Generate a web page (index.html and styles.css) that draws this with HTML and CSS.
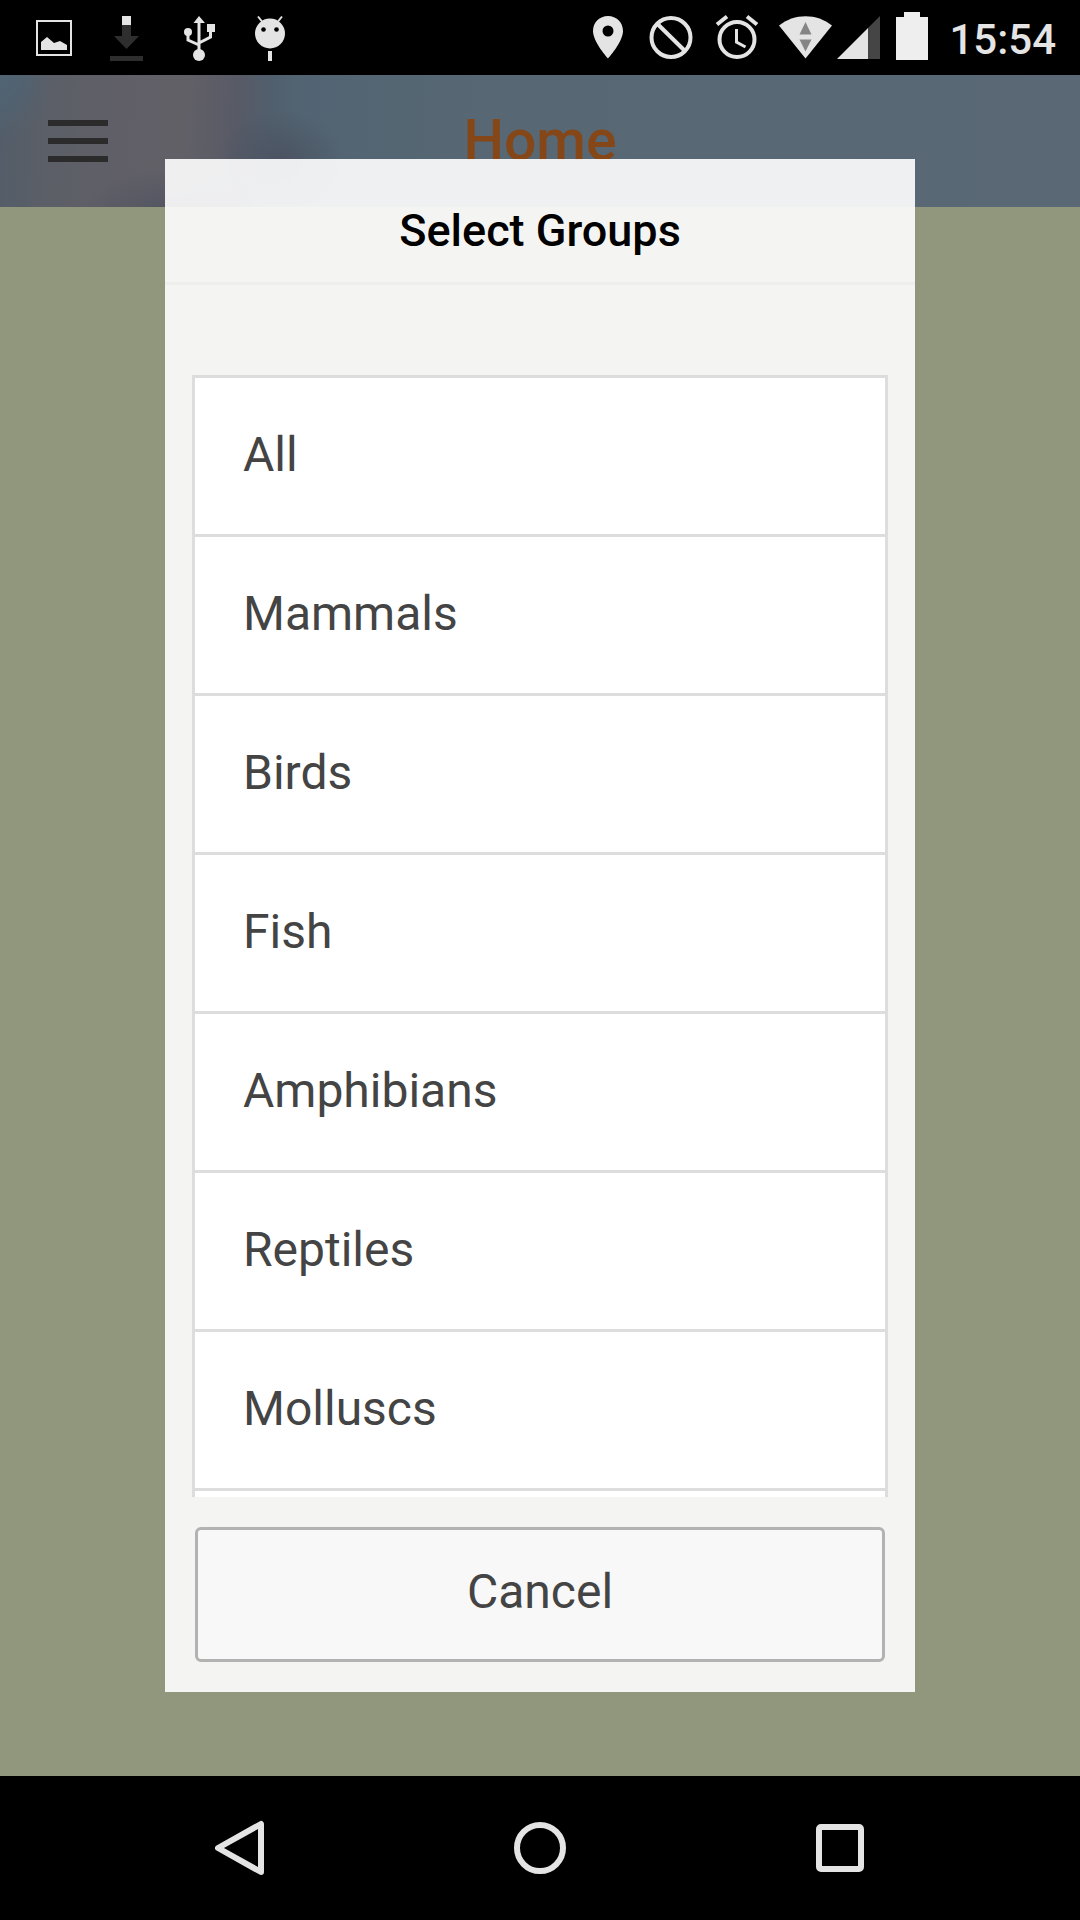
FILE: index.html
```
<!DOCTYPE html>
<html lang="en">
<head>
<meta charset="utf-8">
<meta name="viewport" content="width=device-width, initial-scale=1">
<title>Select Groups</title>
<link rel="stylesheet" href="styles.css">
</head>
<body>
<div class="screen">
  <div class="status-bar">
    <div class="status-group status-group-left">
      <svg class="status-icon" viewBox="0 0 48 48" aria-hidden="true"><rect x="7" y="7" width="34" height="34" fill="none" stroke="#e4e4e4" stroke-width="2"/><path d="M11 36V28l6-5 7 6 6-2 7 4v5z"/></svg>
      <svg class="status-icon" viewBox="0 0 48 48" aria-hidden="true"><path d="M20 2h9v9h-9z"/><path fill="#2e2e2e" d="M20 11h9v11h8L24.500 35 12 22h8zM8 42h33v5H8z"/></svg>
      <svg class="status-icon" viewBox="0 0 48 48" aria-hidden="true"><path d="M25 2l6 7H19.500z"/><path d="M25 8v32M14 18v8l11 5M36.500 14v9L25 29" fill="none" stroke="#e4e4e4" stroke-width="3"/><circle cx="14" cy="18" r="4"/><path d="M33 10h8v8h-8z"/><circle cx="25" cy="41" r="6"/></svg>
      <svg class="status-icon" viewBox="0 0 48 48" aria-hidden="true"><circle cx="24" cy="19.500" r="15"/><path d="M12 2.500l4 5M36 2.500l-4 5" stroke="#e4e4e4" stroke-width="2"/><path d="M22 37h4v10h-4z"/><circle cx="17.500" cy="15.500" r="2.300" fill="#000"/><circle cx="30.500" cy="15.500" r="2.300" fill="#000"/></svg>
    </div>
    <div class="status-group status-group-right">
      <svg class="status-icon status-icon-wide" viewBox="0 0 64 48" aria-hidden="true"><path fill-rule="evenodd" d="M32 2c-8.500 0-15 6.500-15 15 0 11 15 27.500 15 27.500S47 28 47 17C47 8.500 40.500 2 32 2zm0 9.500a5.500 5.500 0 1 1 0 11 5.500 5.500 0 0 1 0-11z"/></svg>
      <svg class="status-icon status-icon-wide" viewBox="0 0 64 48" aria-hidden="true"><g fill="none" stroke="#e4e4e4" stroke-width="4"><circle cx="31" cy="23.500" r="19.500"/><path d="M17.500 10L45 37"/></g></svg>
      <svg class="status-icon status-icon-wide" viewBox="0 0 64 48" aria-hidden="true"><g fill="none" stroke="#e4e4e4" stroke-width="4"><circle cx="33" cy="25.500" r="17.500"/><path stroke-width="3" d="M32.500 15v13l9 5"/><path d="M13 10.500l10-8M43 2.500l10 8"/></g></svg>
      <svg class="status-icon status-icon-wifi" viewBox="-5 0 69 48" aria-hidden="true"><path d="M6 11.500C21-1 44-1 59 11.500l-26.500 33z"/><path fill="#858585" d="M32.500 8l6 12.500h-12zM26.500 25.500h12l-6 12z"/></svg>
      <svg class="status-icon status-icon-signal" viewBox="0 0 44 48" aria-hidden="true"><path fill="#454545" d="M43 2v43H31V14z"/><path d="M31 14v31H0z"/></svg>
      <svg class="status-icon status-icon-wide" viewBox="0 0 64 48" aria-hidden="true"><path fill="#eee" d="M23-2h16v5h8v43H15V3h8z"/></svg>
      <time class="clock" datetime="15:54">15:54</time>
    </div>
  </div>

  <main class="stage">
    <header class="app-header">
      <button class="menu-button" type="button" aria-label="Menu"><span class="menu-line"></span><span class="menu-line"></span><span class="menu-line"></span></button>
      <h1 class="app-title">Home</h1>
    </header>
    <div class="overlay">
      <section class="popup" role="dialog" aria-modal="true" aria-labelledby="popup-title">
        <header class="popup-head"><h2 class="popup-title" id="popup-title">Select Groups</h2></header>
        <ul class="group-list">
          <li><button class="group-item" type="button">All</button></li>
          <li><button class="group-item" type="button">Mammals</button></li>
          <li><button class="group-item" type="button">Birds</button></li>
          <li><button class="group-item" type="button">Fish</button></li>
          <li><button class="group-item" type="button">Amphibians</button></li>
          <li><button class="group-item" type="button">Reptiles</button></li>
          <li><button class="group-item" type="button">Molluscs</button></li>
        </ul>
        <footer class="popup-foot"><button class="cancel-button" type="button">Cancel</button></footer>
      </section>
    </div>
  </main>

  <nav class="nav-bar" aria-label="System">
    <button class="nav-button" type="button" aria-label="Back"><svg class="nav-icon" viewBox="0 0 60 60"><path d="M51 6v48L8 30z"/></svg></button>
    <button class="nav-button" type="button" aria-label="Home screen"><svg class="nav-icon" viewBox="0 0 60 60"><circle cx="30" cy="30" r="23"/></svg></button>
    <button class="nav-button" type="button" aria-label="Recent apps"><svg class="nav-icon" viewBox="0 0 60 60"><rect x="9" y="9" width="42" height="42" rx="2"/></svg></button>
  </nav>
</div>
</body>
</html>
```
FILE: styles.css
```
*,
*::before,
*::after {
  box-sizing: border-box;
}

body {
  margin: 0;
  background: #000;
  font-family: Roboto, "Liberation Sans", sans-serif;
}

h1,
h2,
ul {
  margin: 0;
  padding: 0;
}

button {
  margin: 0;
  padding: 0;
  border: 0;
  background: none;
  font: inherit;
  color: inherit;
}

.screen {
  display: flex;
  flex-direction: column;
  min-height: 100vh;
}

/* System status bar */
.status-bar {
  display: flex;
  justify-content: space-between;
  height: 75px;
  padding: 14px 24px 0 30px;
  background: #000;
}

.status-group {
  display: flex;
  align-items: flex-start;
}

.status-group-left {
  gap: 24px;
}

.status-icon {
  flex: none;
  width: 48px;
  height: 48px;
  fill: #e4e4e4;
  overflow: visible;
}

.status-icon-wide {
  width: 64px;
}

.status-icon-wifi {
  width: 69px;
}

.status-icon-signal {
  width: 44px;
}

.clock {
  padding-left: 4px;
  font-size: 42px;
  font-weight: 500;
  line-height: 52px;
  color: #e4e4e4;
}

/* App content behind the popup */
.stage {
  position: relative;
  display: flex;
  flex: 1;
  flex-direction: column;
  background: #91977d;
}

.app-header {
  display: grid;
  grid-template-columns: 1fr auto 1fr;
  align-items: center;
  height: 132px;
  padding: 0 48px;
  background:
    radial-gradient(ellipse 5% 50% at 0 0, #506474 10%, transparent 100%),
    radial-gradient(ellipse 6% 40% at 26% 66%, #4b5361 0%, transparent 100%),
    radial-gradient(ellipse 10% 40% at 17% 110%, #4d5260 0%, transparent 100%),
    linear-gradient(92deg, #535d69 0%, #5c5f67 5%, #605f67 11%, #626067 17%, #585a66 22%, #515f6d 25%, #526473 28%, #576773 45%, #5a6876 100%);
}

.menu-button {
  display: flex;
  flex-direction: column;
  gap: 12px;
  justify-self: start;
  width: 60px;
}

.menu-line {
  height: 6px;
  background: #2b2b2b;
}

.app-title {
  font-size: 57px;
  font-weight: 500;
  line-height: 66px;
  color: #854718;
}

/* Popup */
.overlay {
  position: absolute;
  inset: 0;
  display: flex;
  justify-content: center;
  padding: 84px 24px;
}

.popup {
  display: flex;
  flex-direction: column;
  width: 100%;
  max-width: 750px;
  background: rgba(255, 255, 255, 0.9);
}

.popup-head {
  padding: 42px 30px 21px;
  border-bottom: 3px solid #eee;
  text-align: center;
}

.popup-title {
  font-size: 45px;
  font-weight: 500;
  line-height: 60px;
  color: #000;
}

.group-list {
  flex: 1;
  margin: 90px 27px 0;
  border: 3px solid #ddd;
  border-bottom: 0;
  overflow: auto;
  background: #fff;
  list-style: none;
}

.group-item {
  display: block;
  width: 100%;
  padding: 47px 48px 49px;
  border-bottom: 3px solid #ddd;
  font-size: 48px;
  line-height: 60px;
  text-align: left;
  color: #444;
}

.popup-foot {
  padding: 30px;
}

.cancel-button {
  display: block;
  width: 100%;
  height: 135px;
  padding-bottom: 6px;
  border: 3px solid #b2b2b2;
  border-radius: 6px;
  background: #f8f8f8;
  font-size: 48px;
  line-height: 60px;
  color: #444;
}

/* System navigation bar */
.nav-bar {
  display: flex;
  height: 144px;
  padding: 0 90px;
  background: #000;
}

.nav-button {
  display: flex;
  flex: 1;
  align-items: center;
  justify-content: center;
}

.nav-icon {
  width: 60px;
  height: 60px;
  fill: none;
  stroke: #e4e4e4;
  stroke-width: 6;
  stroke-linejoin: round;
}
```
